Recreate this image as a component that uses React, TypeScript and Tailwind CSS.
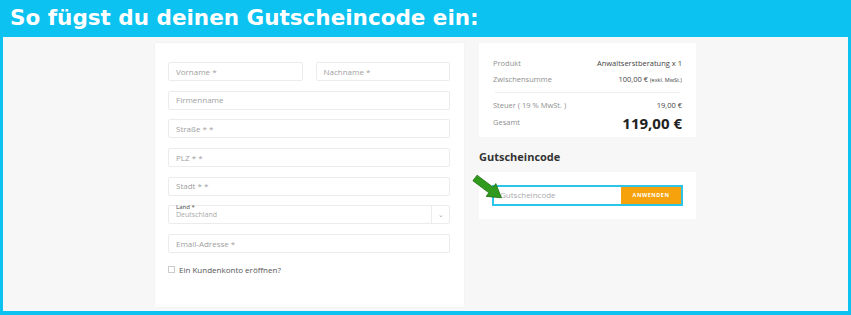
import { ReactNode } from "react";

const Field = ({ label, className = "" }: { label: string; className?: string }) => (
    <div
        className={`h-[19px] border border-[#ececec] bg-white rounded-[2px] flex items-center px-[7px] text-[8px] text-[#a0a0a0] ${className}`}>
        {label}
    </div>
);

const Row = ({ left, right, strong }: { left: string; right: ReactNode; strong?: boolean }) => (
    <div className="flex items-center justify-between text-[7.5px] text-[#8f8f8f]">
        <span>{left}</span>
        <span className={strong ? "text-[15px] font-bold text-[#222]" : "text-[#444]"}>{right}</span>
    </div>
);

const Arrow = () => (
    <svg width="34" height="30" viewBox="0 0 34 30" className="absolute left-[471px] top-[173px]">
        <path
            d="M1.9 7.8 L6.1 2.2 L22.1 14.2 L24.8 10.6 L30.4 24.8 L15.2 23.4 L17.9 19.8 Z"
            fill="#2f9a1c"
            stroke="#1f6d12"
            strokeWidth="0.8"
            strokeLinejoin="round"
        />
    </svg>
);

const App = () => {
    return (
        <div
            className="relative w-[851px] h-[315px] bg-[#0bc2f0] flex flex-col overflow-hidden"
            style={{ fontFamily: "'Open Sans', 'Noto Sans', sans-serif" }}>
            <div
                className="h-[37px] flex items-center pl-[10px] text-white text-[21.5px] font-bold"
                style={{ fontFamily: "'DejaVu Sans', sans-serif" }}>
                So fügst du deinen Gutscheincode ein:
            </div>
            <div className="flex-1 ml-[3px] mr-[3px] mb-[4px] bg-[#f7f7f7] flex justify-center gap-[15px] pt-[6px] pb-[4px]">
                {/* form */}
                <div className="w-[309px] bg-white shadow-[0_0_2px_rgba(0,0,0,0.05)] pt-[19px] pl-[13px] pr-[14px] flex flex-col gap-[9.7px]">
                    <div className="flex gap-[13px]">
                        <Field label="Vorname *" className="flex-1" />
                        <Field label="Nachname *" className="flex-1" />
                    </div>
                    <Field label="Firmenname" />
                    <Field label="Straße * *" />
                    <Field label="PLZ * *" />
                    <Field label="Stadt * *" />
                    <div className="relative h-[19px] border border-[#ececec] bg-white rounded-[2px] flex items-end">
                        <span className="absolute left-[7px] -top-[3px] text-[6px] text-[#444]">Land *</span>
                        <span className="flex-1 pl-[7px] pb-[3px] text-[7px] text-[#aaa]">Deutschland</span>
                        <span className="w-[18px] h-full border-l border-[#ececec] flex items-center justify-center text-[7px] text-[#aaa]">
                            ⌄
                        </span>
                    </div>
                    <Field label="Email-Adresse *" />
                    <label className="flex items-center gap-[4px] mt-[1px] text-[8px] text-[#555]">
                        <span className="w-[7px] h-[7px] border border-[#ccc] bg-white" />
                        Ein Kundenkonto eröffnen?
                    </label>
                </div>
                {/* summary */}
                <div className="w-[217px] flex flex-col">
                    <div className="bg-white h-[94px] px-[14px] pt-[15px] flex flex-col">
                        <Row left="Produkt" right="Anwaltserstberatung x 1" />
                        <div className="mt-[5px]">
                            <Row
                                left="Zwischensumme"
                                right={
                                    <>
                                        100,00 € <span className="text-[5.5px]">(exkl. MwSt.)</span>
                                    </>
                                }
                            />
                        </div>
                        <div className="h-px bg-[#eee] mt-[6px] mx-[2px]" />
                        <div className="mt-[7px]">
                            <Row left="Steuer ( 19 % MwSt. )" right="19,00 €" />
                        </div>
                        <div className="mt-[1px]">
                            <Row left="Gesamt" right="119,00 €" strong />
                        </div>
                    </div>
                    <div className="mt-[12px] text-[11px] font-bold text-[#333]">Gutscheincode</div>
                    <div className="mt-[6px] bg-white h-[47px] px-[13px] flex items-center">
                        <div className="flex-1 h-[21px] border-2 border-[#2cc5ea] flex items-stretch">
                            <span className="flex-1 flex items-center pl-[6px] text-[8px] text-[#aaa]">Gutscheincode</span>
                            <span className="w-[60px] bg-[#f5a20d] flex items-center justify-center text-[5.5px] font-bold text-white tracking-[0.5px]">
                                ANWENDEN
                            </span>
                        </div>
                    </div>
                </div>
            </div>
            <Arrow />
        </div>
    );
};

export default App;
